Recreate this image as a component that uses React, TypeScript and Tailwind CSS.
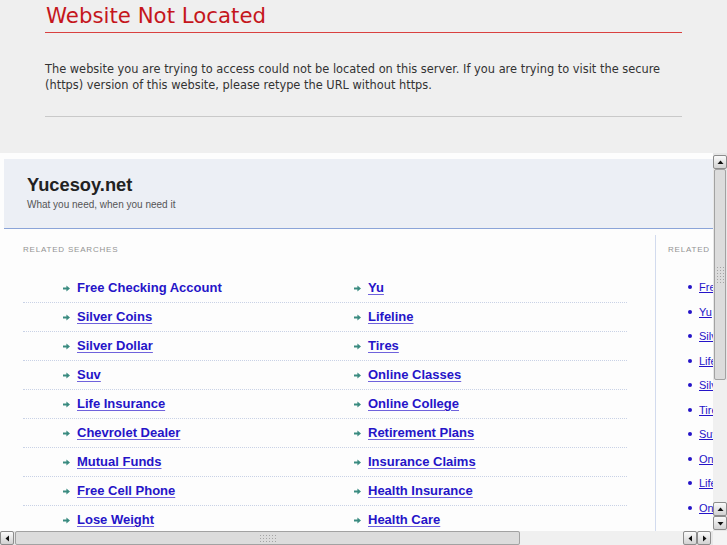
import React from "react";

const col1 = [
  "Free Checking Account",
  "Silver Coins",
  "Silver Dollar",
  "Suv",
  "Life Insurance",
  "Chevrolet Dealer",
  "Mutual Funds",
  "Free Cell Phone",
  "Lose Weight",
];
const col2 = [
  "Yu",
  "Lifeline",
  "Tires",
  "Online Classes",
  "Online College",
  "Retirement Plans",
  "Insurance Claims",
  "Health Insurance",
  "Health Care",
];
const side = [
  "Free Checking Account",
  "Yu",
  "Silver Coins",
  "Lifeline",
  "Silver Dollar",
  "Tires",
  "Suv",
  "Online Classes",
  "Life Insurance",
  "Online College",
];

function Arrow() {
  return (
    <svg width="7" height="7" viewBox="0 0 7 7" className="shrink-0">
      <path d="M0 2.6h3.4V0.5L7 3.5 3.4 6.5V4.4H0z" fill="#3a8b80" />
    </svg>
  );
}

function Tri({ dir }: { dir: "up" | "down" | "left" | "right" }) {
  const d =
    dir === "up"
      ? "M0.5 5L3.5 1.5L6.5 5z"
      : dir === "down"
      ? "M0.5 2L3.5 5.5L6.5 2z"
      : dir === "left"
      ? "M5 0.5L1.5 3.5L5 6.5z"
      : "M2 0.5L5.5 3.5L2 6.5z";
  return (
    <svg width="7" height="7" viewBox="0 0 7 7">
      <path d={d} fill="#111" />
    </svg>
  );
}

function Btn({ dir }: { dir: "up" | "down" | "left" | "right" }) {
  return (
    <div className="w-[14px] h-[14px] shrink-0 border border-[#8c8c8c] rounded-[2px] bg-gradient-to-b from-[#fbfbfb] to-[#d2d2d2] flex items-center justify-center">
      <Tri dir={dir} />
    </div>
  );
}

function Grip({ w, h }: { w: number; h: number }) {
  return (
    <div
      className="bg-[radial-gradient(circle,#a4a4a4_0.7px,transparent_1px)] bg-[length:3px_3px]"
      style={{ width: w, height: h }}
    />
  );
}

export default function App() {
  return (
    <div className="w-[727px] h-[545px] overflow-hidden bg-white">
      {/* top error page */}
      <div className="h-[153px] bg-[#efefef] font-['DejaVu_Sans',sans-serif]">
        <div className="w-[637px] mx-auto pt-[3px]">
          <h1 className="text-[21.3px] leading-[26px] text-[#c5161c] pl-px pb-[3px] border-b border-[#d9403f]">
            Website Not Located
          </h1>
          <p className="mt-[28px] text-[11.4px] leading-[16px] text-[#333]">
            The website you are trying to access could not be located on this server. If you are trying to visit the
            secure (https) version of this website, please retype the URL without https.
          </p>
          <div className="mt-[23px] h-px bg-[#c9c9c9]" />
        </div>
      </div>

      {/* framed page */}
      <div className="h-[392px] grid grid-cols-[713px_14px] grid-rows-[378px_14px] font-['Liberation_Sans',Arial,sans-serif]">
        <div className="overflow-hidden bg-[#fdfdfd]">
          <div className="w-[1000px] pt-[6px] pl-[4px]">
            <div className="h-[70px] bg-[#eceff5] border-b border-[#8ba4d8] pl-[23px] pt-[15px]">
              <div className="text-[18.3px] leading-[22px] font-bold text-[#222]">Yucesoy.net</div>
              <div className="mt-[3px] text-[10px] leading-[12px] text-[#555]">What you need, when you need it</div>
            </div>
            <div className="flex">
              <div className="w-[651px] shrink-0 pl-[19px]">
                <div className="mt-[15px] text-[8px] leading-[12px] tracking-[0.8px] text-[#939393]">
                  RELATED SEARCHES
                </div>
                <div className="mt-[18px] w-[604px]">
                  {col1.map((a, i) => (
                    <div key={a} className="flex h-[29px] border-b border-dotted border-[#c9d2e6]">
                      <div className="w-[291px] pl-[40px] flex items-center gap-[7px]">
                        <Arrow />
                        <a
                          className={
                            "text-[13px] font-bold text-[#2514c8] " +
                            (i === 0 ? "no-underline" : "underline decoration-[#6f62dc] underline-offset-[2px]")
                          }
                        >
                          {a}
                        </a>
                      </div>
                      <div className="pl-[40px] flex items-center gap-[7px]">
                        <Arrow />
                        <a className="text-[13px] font-bold text-[#2514c8] underline decoration-[#6f62dc] underline-offset-[2px]">
                          {col2[i]}
                        </a>
                      </div>
                    </div>
                  ))}
                </div>
              </div>
              <div className="mt-[6px] border-l border-[#d2dbee] pl-[12px] w-[300px]">
                <div className="mt-[9px] text-[8px] leading-[12px] tracking-[0.8px] text-[#939393]">
                  RELATED SEARCHES
                </div>
                <div className="mt-[19px]">
                  {side.map((s) => (
                    <div key={s} className="h-[24.5px] flex items-center pl-[20px] gap-[7px]">
                      <span className="w-[4px] h-[4px] rounded-full bg-[#2514c8] shrink-0" />
                      <a className="text-[11px] text-[#2514c8] underline whitespace-nowrap">{s}</a>
                    </div>
                  ))}
                </div>
              </div>
            </div>
          </div>
        </div>

        {/* vertical scrollbar */}
        <div className="flex flex-col pt-[2px] bg-[#e7e7e7]">
          <Btn dir="up" />
          <div className="h-[211px] mx-px border border-[#a2a2a2] rounded-[2px] bg-[#dcdcdc] flex items-center justify-center">
            <Grip w={8} h={18} />
          </div>
          <div className="flex-1 bg-[radial-gradient(circle,#ffffff_0.6px,transparent_0.8px)] bg-[length:2px_2px] bg-[#e4e4e4]" />
          <Btn dir="up" />
          <Btn dir="down" />
          <div className="h-px" />
        </div>

        {/* horizontal scrollbar */}
        <div className="flex items-stretch bg-[#e7e7e7]">
          <Btn dir="left" />
          <div className="w-[505px] ml-px border border-[#a2a2a2] rounded-[2px] bg-[#dcdcdc] flex items-center justify-center">
            <Grip w={18} h={9} />
          </div>
          <div className="flex-1 bg-[radial-gradient(circle,#ffffff_0.6px,transparent_0.8px)] bg-[length:2px_2px] bg-[#e4e4e4]" />
          <Btn dir="left" />
          <Btn dir="right" />
          <div className="w-[2px]" />
        </div>
        <div className="bg-[#f4f4f4]" />
      </div>
    </div>
  );
}
